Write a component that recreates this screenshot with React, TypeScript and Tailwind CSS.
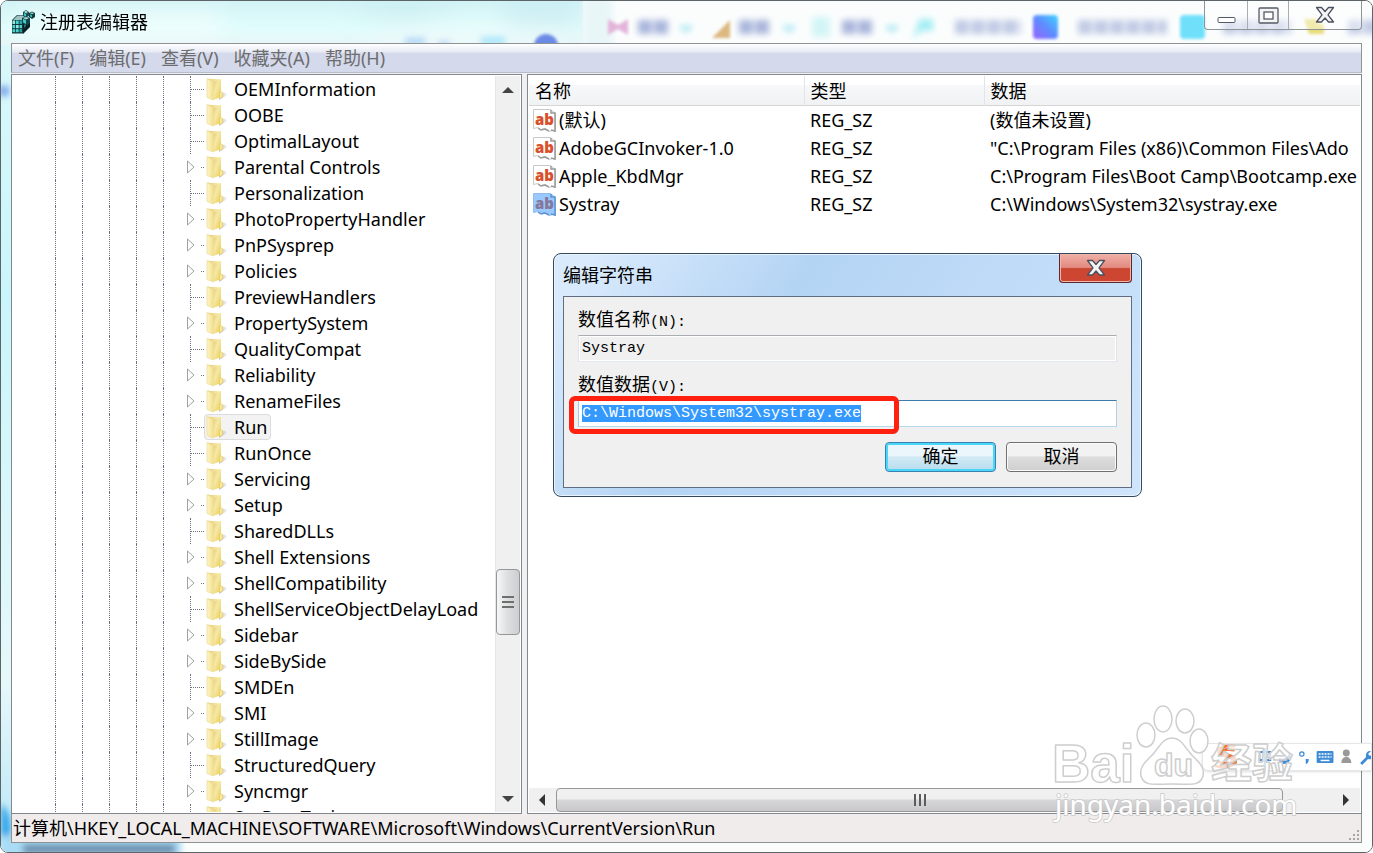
import React, { useEffect, useRef } from "react";

type TreeItem = { name: string; expandable?: boolean; selected?: boolean };

const treeItems: TreeItem[] = [
  { name: "OEMInformation" },
  { name: "OOBE" },
  { name: "OptimalLayout" },
  { name: "Parental Controls", expandable: true },
  { name: "Personalization" },
  { name: "PhotoPropertyHandler", expandable: true },
  { name: "PnPSysprep", expandable: true },
  { name: "Policies", expandable: true },
  { name: "PreviewHandlers" },
  { name: "PropertySystem", expandable: true },
  { name: "QualityCompat" },
  { name: "Reliability", expandable: true },
  { name: "RenameFiles", expandable: true },
  { name: "Run", selected: true },
  { name: "RunOnce" },
  { name: "Servicing", expandable: true },
  { name: "Setup", expandable: true },
  { name: "SharedDLLs" },
  { name: "Shell Extensions", expandable: true },
  { name: "ShellCompatibility", expandable: true },
  { name: "ShellServiceObjectDelayLoad" },
  { name: "Sidebar", expandable: true },
  { name: "SideBySide", expandable: true },
  { name: "SMDEn" },
  { name: "SMI", expandable: true },
  { name: "StillImage", expandable: true },
  { name: "StructuredQuery" },
  { name: "Syncmgr", expandable: true },
  { name: "SysPrepTapi" },
];

const values = [
  { name: "(默认)", type: "REG_SZ", data: "(数值未设置)" },
  {
    name: "AdobeGCInvoker-1.0",
    type: "REG_SZ",
    data: '"C:\\Program Files (x86)\\Common Files\\Ado',
  },
  {
    name: "Apple_KbdMgr",
    type: "REG_SZ",
    data: "C:\\Program Files\\Boot Camp\\Bootcamp.exe",
  },
  {
    name: "Systray",
    type: "REG_SZ",
    data: "C:\\Windows\\System32\\systray.exe",
    selected: true,
  },
];

const menus = ["文件(F)", "编辑(E)", "查看(V)", "收藏夹(A)", "帮助(H)"];

const RegeditIcon = () => (
  <svg width="24" height="26" viewBox="0 0 24 26" aria-hidden="true">
    {/* Large cube */}
    <path d="M1 11l5-5h8l2 3v11l-4 4.500H1z" fill="#12383b" />
    <path d="M2 11l4.500-4.500h8L11 11z" fill="#9fc3c3" />
    <g fill="#48d3d0">
      <rect x="1.500" y="11.500" width="2.700" height="3.500" fill="#8fe6e2" />
      <rect x="5" y="11.500" width="2.700" height="3.500" />
      <rect x="8.500" y="11.500" width="2.500" height="3.500" fill="#2ea3a2" />
      <rect x="1.500" y="16" width="2.700" height="3.200" />
      <rect x="5" y="16" width="2.700" height="3.200" fill="#8fe6e2" />
      <rect x="8.500" y="16" width="2.500" height="3.200" />
      <rect x="1.500" y="20.200" width="2.700" height="3" />
      <rect x="5" y="20.200" width="2.700" height="3" />
      <rect x="8.500" y="20.200" width="2.500" height="3" fill="#2ea3a2" />
    </g>
    <path d="M12 11l7-2v9l-7 7z" fill="#0a2224" />
    <path d="M13 16l2-2v3l-2 2zM16 13l2-2v3l-2 2z" fill="#1f7577" />
    {/* Small cubes breaking away */}
    <path d="M11 9l4-2 4 2v5l-4 2-4-2z" fill="#11474a" />
    <path d="M12 9l3-1.300L18 9l-3 1.500z" fill="#a5dcd9" />
    <path d="M12 10l3 1.300V15l-3-1.500z" fill="#45cbc8" />
    <path d="M12 3l3-2 3 2v4l-3 1.500L12 7z" fill="#194f53" />
    <path d="M13 3l2-1.200L17 3l-2 1.200z" fill="#b3e2df" />
    <path d="M13 4l2 1v2.500l-2-1z" fill="#4ac5c3" />
    <path d="M18 4l3-1.500L24 4v4l-3 2-3-2z" fill="#113c3f" />
    <path d="M19 4.300l2-1 2 1-2 1z" fill="#8ed2d0" />
    <path d="M19 5.300l2 1v2.200l-2-1z" fill="#3db7b5" />
  </svg>
);

const FolderIcon = () => (
  <svg
    width="24"
    height="26"
    viewBox="0 0 24 26"
    className="shrink-0"
    aria-hidden="true"
  >
    <defs>
      <linearGradient id="folderFront" x1="0" y1="0" x2="1" y2="1">
        <stop offset="0" stopColor="#e6cb7c" />
        <stop offset="0.4" stopColor="#f6e9a6" />
        <stop offset="1" stopColor="#e8c84e" />
      </linearGradient>
      <linearGradient id="folderSide" x1="0" y1="0" x2="1" y2="0">
        <stop offset="0" stopColor="#fdf6c4" />
        <stop offset="1" stopColor="#f3de8c" />
      </linearGradient>
      <linearGradient id="folderShadow" x1="0" y1="0" x2="1" y2="0">
        <stop offset="0" stopColor="#8a8a8a" stopOpacity="0.6" />
        <stop offset="1" stopColor="#8a8a8a" stopOpacity="0" />
      </linearGradient>
    </defs>
    <path d="M15 24l9-5.500-4-2-4 2z" fill="url(#folderShadow)" />
    <path d="M3.500 2.800L17 3.200v15L8.500 23z" fill="url(#folderFront)" />
    <path
      d="M3 2.500l6.500 3.200V24L3 21.500z"
      fill="url(#folderSide)"
      stroke="#ead58a"
      strokeWidth="0.600"
    />
    <path d="M9.500 5.700l7.500-2V21l-7.500 3z" fill="url(#folderFront)" />
    <path
      d="M15.500 16.500q2-1 3 0v4.500l-3 1.500z"
      fill="#fbe98e"
      stroke="#e2c25a"
      strokeWidth="0.500"
    />
  </svg>
);

const ValueIcon = ({ selected }: { selected?: boolean }) => (
  <svg
    width="25"
    height="25"
    viewBox="0 0 25 25"
    className="shrink-0"
    aria-hidden="true"
  >
    <path
      d="M.5 1.500h17l5 4v18l-3-1-3 1-4-3-5 1-3-2-4 1z"
      fill={selected ? "#99c9ff" : "#fff"}
      stroke={selected ? "#8ebdf0" : "#c9c9c9"}
    />
    <path
      d="M18 2v3h4v18l-4-1M5 20l3 2 4-1 4 2"
      fill="none"
      stroke={selected ? "#5d93cf" : "#999"}
      strokeWidth="1.500"
    />
    <text
      x="2"
      y="17"
      fontFamily="Open Sans, sans-serif"
      fontSize="15"
      fontWeight="800"
      fill={selected ? "#85779c" : "#d9512c"}
    >
      ab
    </text>
  </svg>
);

const CloseGlyph = () => (
  <svg width="20" height="18" viewBox="0 0 20 18" aria-hidden="true">
    <path
      d="M1.500 1.500h5L10 5.500l3.500-4h5L13 8.800l5.500 7.200h-5L10 12l-3.500 4h-5L7 8.800z"
      fill="#f4f4f4"
      stroke="#4b5060"
      strokeWidth="1.300"
      strokeLinejoin="round"
    />
  </svg>
);

// Blurred desktop seen through the glass frame
const GlassBackdrop = () => (
  <svg className="absolute inset-0 h-full w-full" aria-hidden="true">
    <defs>
      <linearGradient id="aqua" x1="0" y1="0" x2="0" y2="1">
        <stop offset="0" stopColor="#d2f3f6" />
        <stop offset="0.6" stopColor="#e0fdfc" />
        <stop offset="1" stopColor="#e9f6f7" />
      </linearGradient>
      <linearGradient id="leftEdge" x1="0" y1="0" x2="0" y2="1">
        <stop offset="0" stopColor="#dcf9fa" />
        <stop offset="0.35" stopColor="#c9f6fb" />
        <stop offset="0.8" stopColor="#e6f8fa" />
        <stop offset="1" stopColor="#b9e6f6" />
      </linearGradient>
      <linearGradient id="violet" x1="1" y1="0" x2="0" y2="1">
        <stop offset="0" stopColor="#3fd2ff" />
        <stop offset="0.5" stopColor="#5f8bff" />
        <stop offset="1" stopColor="#9a62ff" />
      </linearGradient>
      <filter id="soft" x="-5%" y="-50%" width="110%" height="200%">
        <feGaussianBlur stdDeviation="3" />
      </filter>
      <filter id="crisp" x="-5%" y="-50%" width="110%" height="200%">
        <feGaussianBlur stdDeviation="1.800" />
      </filter>
      <filter id="wide">
        <feGaussianBlur stdDeviation="12" />
      </filter>
    </defs>
    <rect width="100%" height="100%" fill="#fbfdfd" />
    <rect width="14" height="100%" fill="url(#leftEdge)" />
    <rect width="582" height="44" fill="url(#aqua)" />
    <g filter="url(#wide)">
      <path d="M20 12h200v22H20z" fill="#fff" opacity="0.6" />
      <path d="M340 4h130l-70 16z" fill="#bfe6ea" opacity="0.7" />
      <path d="M500 0h78v26h-70z" fill="#c4e8ef" opacity="0.7" />
      <path d="M380 30h190v14H380z" fill="#f3fbfc" />
    </g>
    <g filter="url(#soft)">
      <rect x="582" y="-10" width="30" height="64" fill="#e9f6f8" />
      <path d="M404 37h20v7h-20z" fill="#b0d6f7" />
      <path d="M438 41h10v3h-10z" fill="#8fb8f5" />
      <path d="M480 36h24v8h-24z" fill="#a8e6fb" />
      <g stroke="#a9b6dc" strokeWidth="14" strokeDasharray="14 2">
        <path d="M637 26h31M738 26h32M841 26h32" />
        <path d="M954 26h66M1077 26h89M1222 26h68M1347 26h40" opacity="0.7" />
      </g>
      <path
        d="M680 25l5 4 5-4M783 25l5 4 5-4M886 25l5 4 5-4"
        fill="none"
        stroke="#9be3f0"
        strokeWidth="4"
      />
      <path d="M912 38l6-20h14v12h-12z" fill="#a5eef5" />
      <path d="M811 16h18v20h-18z" fill="#d3f5f6" />
      <path d="M-2 90q8 0 10 0" stroke="#7ba6ee" strokeWidth="10" />
    </g>
    <g filter="url(#crisp)">
      <circle cx="545" cy="45" r="12" fill="#6b8ae6" />
      <path d="M607 18l10 6 10-6v16l-10-6-10 6z" fill="#e3b4da" />
      <path d="M711 37l18-18v18z" fill="#dcb880" />
      <rect x="1032" y="14" width="25" height="24" rx="4" fill="url(#violet)" />
      <rect x="1179" y="14" width="25" height="24" rx="4" fill="#70e0fa" />
      <path d="M1303 18h14v4l6 2v9h-15z" fill="#e8dc78" />
    </g>
    {/* Bottom left corner of the desktop */}
    <svg y="100%" overflow="visible">
      <g filter="url(#soft)">
        <path d="M0-48q12 10 9 32H0z" fill="#2ea4ec" />
        <path d="M0-16h180V4H0z" fill="#a9dcf4" />
        <path d="M22-8h152V2H22z" fill="#6d8fb0" />
      </g>
    </svg>
  </svg>
);

const ImeBar = () => (
  <div
    className="absolute top-[742px] right-0 flex h-7 w-[170px] items-center rounded-l-md border border-gray-200 bg-white shadow"
    aria-hidden="true"
  >
    <svg width="170" height="28" viewBox="0 0 170 28">
      <path
        d="M33 3c-8-1-18 0-17 6 1 5 14 4 14 8s-8 4-15 2M12 23c9 2 22 1 21-6-1-6-14-4-14-8 0-3 8-3 13-2"
        fill="none"
        stroke="#f0763a"
        strokeWidth="3"
      />
      <path d="M57 9h11v8H57zM62.500 5v17" fill="none" stroke="#3d8ad6" strokeWidth="2" />
      <path d="M77 15c4 2 9 0 10-5 5 6-1 11-5 11s-6-3-5-6z" fill="#3d8ad6" />
      <circle cx="100" cy="11" r="2.200" fill="none" stroke="#3d8ad6" strokeWidth="1.200" />
      <path d="M104 16h3c0 3-1 5-3 5z" fill="#3d8ad6" />
      <rect x="115" y="8" width="17" height="12" rx="1" fill="#3d8ad6" />
      <path
        d="M117 11h13M117 14h13"
        stroke="#fff"
        strokeWidth="1.500"
        strokeDasharray="2 1"
      />
      <path d="M119 17.500h9" stroke="#fff" strokeWidth="1.500" />
      <circle cx="145" cy="10" r="3.500" fill="#999" />
      <path d="M140 20c0-8 10-8 10 0z" fill="#999" />
      <path
        d="M159 20l6-6c-1-4 2-7 5-6l-3 3 2 2 3-2c1 4-2 6-5 5l-6 6z"
        fill="#3d8ad6"
      />
    </svg>
  </div>
);

const Watermark = () => (
  <svg
    className="pointer-events-none absolute top-[698px] right-[63px]"
    width="260"
    height="130"
    viewBox="0 0 260 130"
    aria-hidden="true"
  >
    <g
      fill="#fff"
      fillOpacity="0.75"
      stroke="#cecece"
      strokeWidth="1.500"
      strokeLinejoin="round"
    >
      <ellipse cx="97" cy="36" rx="9" ry="12" />
      <ellipse cx="114" cy="20" rx="9" ry="13" />
      <ellipse cx="136" cy="22" rx="9" ry="12" />
      <ellipse cx="150" cy="42" rx="9" ry="12" />
      <path d="M123 39c9 0 12 8 18 15 8 9 15 13 13 23-3 11-14 8-31 8s-28 3-31-8c-2-10 5-14 13-23 6-7 9-15 18-15z" />
      <text x="3" y="83" fontFamily="Liberation Sans, sans-serif" fontSize="53" fontWeight="700">
        Bai
      </text>
      <text x="105" y="77" fontFamily="Liberation Sans, sans-serif" fontSize="32" fontWeight="700">
        du
      </text>
      <text x="162" y="79" fontFamily="Noto Sans CJK SC, sans-serif" fontSize="41" fontWeight="700">
        经验
      </text>
    </g>
    <text
      x="6"
      y="116"
      fontFamily="Noto Sans, sans-serif"
      fontSize="28"
      fill="#fff"
      stroke="#c9c9c9"
      strokeWidth="1.500"
      paintOrder="stroke"
    >
      jingyan.baidu.com
    </text>
  </svg>
);

const TreePane = () => (
  <div className="flex w-[511px] shrink-0 border border-[#828790] bg-white p-px">
    <ul className="min-w-0 flex-1 overflow-hidden">
      {treeItems.map((item) => (
        <li key={item.name} className="flex h-[26px] pl-[42px]">
          {[0, 1, 2, 3, 4].map((level) => (
            <span
              key={level}
              className="w-[27px] shrink-0 border-l border-dotted border-gray-500"
            />
          ))}
          {item.expandable ? (
            <span className="flex w-[14px] shrink-0 items-center justify-between">
              <svg
                width="10"
                height="14"
                viewBox="0 0 10 14"
                className="-ml-1"
                aria-hidden="true"
              >
                <path d="M1.500 1v12L8 7z" fill="#fff" stroke="#a0a0a0" />
              </svg>
              <span className="w-[3px] border-t border-dotted border-gray-500" />
            </span>
          ) : (
            <span className="flex w-[14px] shrink-0 items-center border-l border-dotted border-gray-500">
              <span className="w-full border-t border-dotted border-gray-500" />
            </span>
          )}
          <span
            className={
              item.selected
                ? "flex items-center rounded-sm bg-[#f3f3f3] pr-1 outline outline-[#dcdcdc] -outline-offset-1"
                : "flex items-center pr-1"
            }
          >
            <FolderIcon />
            <span className="ml-[6px] text-lg leading-[26px] whitespace-nowrap">
              {item.name}
            </span>
          </span>
        </li>
      ))}
    </ul>
    {/* Vertical scroll bar */}
    <div className="flex w-[25px] shrink-0 flex-col items-center border-l border-[#e6e6e6] bg-[#f0f0f0]">
      <svg width="24" height="28" viewBox="0 0 24 28" aria-hidden="true">
        <path d="M6 17l6-6 6 6z" fill="#444" />
      </svg>
      <div className="flex-[466]" />
      <div className="flex h-[66px] w-6 flex-col items-center justify-center gap-[3px] rounded-sm border border-[#979797] bg-linear-to-r from-[#f6f6f6] via-[#dcdee0] to-[#cdced0]">
        <span className="h-[2px] w-3 bg-[#6f6f6f]" />
        <span className="h-[2px] w-3 bg-[#6f6f6f]" />
        <span className="h-[2px] w-3 bg-[#6f6f6f]" />
      </div>
      <div className="flex-[149]" />
      <svg width="24" height="28" viewBox="0 0 24 28" aria-hidden="true">
        <path d="M6 12l6 6 6-6z" fill="#444" />
      </svg>
    </div>
  </div>
);

const ValuePane = () => (
  <div className="flex min-w-0 flex-1 flex-col border border-[#828790] bg-white p-px">
    <div className="min-h-0 flex-1 overflow-hidden">
      <table className="w-full table-fixed border-collapse text-lg">
        <thead>
          <tr className="h-[29px] border-b border-[#d5d5d5] bg-linear-to-b from-white from-30% via-[#f7f8fa] via-30% to-[#f1f2f4] text-left">
            <th className="w-[275px] border-r border-[#e3e4e6] p-0 pt-px pl-[6px] leading-7 font-normal">
              名称
            </th>
            <th className="w-[180px] border-r border-[#e3e4e6] p-0 pt-px pl-[6px] leading-7 font-normal">
              类型
            </th>
            <th className="p-0 pt-px pl-[6px] leading-7 font-normal">数据</th>
          </tr>
        </thead>
        <tbody>
          {values.map((v) => (
            <tr key={v.name} className="h-7">
              <td className="p-0 pl-1">
                <span className="flex h-7 items-center gap-px">
                  <ValueIcon selected={v.selected} />
                  <span className="leading-7">{v.name}</span>
                </span>
              </td>
              <td className="p-0 pl-[6px] leading-7">{v.type}</td>
              <td className="overflow-hidden p-0 pl-[6px] leading-7 whitespace-nowrap">
                {v.data}
              </td>
            </tr>
          ))}
        </tbody>
      </table>
    </div>
    {/* Horizontal scroll bar */}
    <div className="flex h-6 shrink-0 items-center bg-[#f0f0f0]">
      <svg width="27" height="24" viewBox="0 0 27 24" aria-hidden="true">
        <path d="M16 6v12l-6-6z" fill="#333" />
      </svg>
      <div className="flex h-6 flex-1 items-center justify-center gap-[3px] rounded-sm border border-[#979797] bg-linear-to-b from-[#f0f0f0] from-45% via-[#d8d8da] via-50% to-[#c8c8ca]">
        <span className="h-3 w-[2px] bg-[#5c5c5c]" />
        <span className="h-3 w-[2px] bg-[#5c5c5c]" />
        <span className="h-3 w-[2px] bg-[#5c5c5c]" />
      </div>
      <div className="w-[50px]" />
      <svg width="27" height="24" viewBox="0 0 27 24" aria-hidden="true">
        <path d="M10 6v12l6-6z" fill="#333" />
      </svg>
    </div>
  </div>
);

const EditStringDialog = () => {
  const dataRef = useRef<HTMLInputElement>(null);

  useEffect(() => {
    dataRef.current?.focus();
    dataRef.current?.select();
  }, []);

  return (
    <div
      role="dialog"
      aria-labelledby="dialog-title"
      className="absolute top-[252px] left-[552px] w-[589px] rounded-lg border border-[#35495e] bg-linear-125 from-[#d9eafc] from-5% via-[#b4d4f4] via-35% to-[#cfe5fc] px-[9px] pb-[8px] shadow-[inset_0_0_0_1px_#e8f4ff]"
    >
      <div className="flex h-[42px] items-start justify-between">
        <h2 id="dialog-title" className="mt-2 text-lg leading-[26px]">
          编辑字符串
        </h2>
        <button
          type="button"
          aria-label="关闭"
          className="flex h-[29px] w-[73px] items-center justify-center rounded-b border border-t-0 border-[#5c2a2c] bg-linear-to-b from-[#f0b0a6] from-0% via-[#e28a80] via-48% to-[#cc4631] to-52% shadow-[inset_0_0_0_1px_#f0b5ab]"
        >
          <CloseGlyph />
        </button>
      </div>
      <form
        className="h-[192px] border border-[#5f6f81] bg-[#f0f0f0] px-[14px] pt-[10px] font-['Liberation_Mono','Noto_Sans_CJK_SC',monospace] text-[15px]"
        onSubmit={(e) => e.preventDefault()}
      >
        <label htmlFor="value-name" className="block h-7 leading-7">
          <span className="text-lg">数值名称</span>(N):
        </label>
        <input
          id="value-name"
          readOnly
          defaultValue="Systray"
          className="block h-[27px] w-full border border-t-[#abadb3] border-r-[#e2e3ea] border-b-[#e3e9ef] border-l-[#e2e3ea] bg-[#f0f0f0] px-[3px] shadow-[inset_0_0_0_1px_#fff]"
        />
        <label htmlFor="value-data" className="mt-[10px] block h-7 leading-7">
          <span className="text-lg">数值数据</span>(V):
        </label>
        <input
          id="value-data"
          ref={dataRef}
          defaultValue="C:\Windows\System32\systray.exe"
          className="block h-[27px] w-full border border-t-[#3d7bad] border-r-[#b5cfe7] border-b-[#b7d9ed] border-l-[#a4c9e3] bg-white px-[3px] outline-none selection:bg-[#3399ff] selection:text-white"
        />
        <div className="mt-[15px] flex justify-end gap-[10px] text-lg">
          <button
            type="submit"
            className="h-[30px] w-[111px] rounded border border-[#3c7fb1] bg-linear-to-b from-[#eaf6fc] from-45% via-[#d3eaf5] via-50% to-[#b5dbed] pt-px leading-7 shadow-[inset_0_0_0_2px_#48d8f7]"
          >
            确定
          </button>
          <button
            type="button"
            className="h-[30px] w-[111px] rounded border border-[#707070] bg-linear-to-b from-[#f2f2f2] from-45% via-[#dddddd] via-50% to-[#cfcfcf] pt-px leading-7 shadow-[inset_0_0_0_1px_#fafafa]"
          >
            取消
          </button>
        </div>
      </form>
      {/* Red highlight over the data field */}
      <div className="pointer-events-none absolute top-[142px] left-[15px] h-[38px] w-[330px] rounded-md border-5 border-[#ff2010]" />
    </div>
  );
};

const App: React.FC = () => {
  return (
    <div className="relative flex h-screen w-full flex-col overflow-hidden rounded-lg border border-[#5d6468] px-[10px] pb-[9px] font-['Noto_Sans','Noto_Sans_CJK_SC',sans-serif] text-black">
      <GlassBackdrop />

      <header className="relative flex h-[42px] shrink-0 items-start justify-between">
        <div className="flex items-center pt-[7px]">
          <RegeditIcon />
          <h1 className="ml-[5px] text-lg leading-7">注册表编辑器</h1>
        </div>
        <div className="flex h-[29px] w-[158px] overflow-hidden rounded-b border border-t-0 border-[#8f9496] bg-white/40">
          <button
            type="button"
            aria-label="最小化"
            className="flex w-[43px] items-center justify-center border-r border-[#a9adaf]"
          >
            <svg width="19" height="18" viewBox="0 0 19 18" aria-hidden="true">
              <rect x="1" y="11.500" width="17" height="5" rx="1" fill="#fff" stroke="#555a66" />
            </svg>
          </button>
          <button
            type="button"
            aria-label="最大化"
            className="flex w-[41px] items-center justify-center border-r border-[#a9adaf]"
          >
            <svg width="21" height="17" viewBox="0 0 21 17" aria-hidden="true">
              <rect x="1" y="1" width="19" height="15" rx="1" fill="#f4f4f4" stroke="#555a66" strokeWidth="1.300" />
              <rect x="6" y="5" width="9" height="7" fill="#fff" stroke="#555a66" strokeWidth="1.300" />
            </svg>
          </button>
          <button
            type="button"
            aria-label="关闭"
            className="flex flex-1 items-center justify-center"
          >
            <CloseGlyph />
          </button>
        </div>
      </header>

      <div className="relative flex min-h-0 flex-1 flex-col border-y border-[#8e9295] bg-[#f0f0f0]">
        <nav className="flex h-[29px] shrink-0 items-center gap-[15px] border-x border-b border-x-[#8e9295] border-b-[#b6bccc] bg-linear-to-b from-white from-0% via-[#e6e9f3] via-30% to-[#d4d9ec] to-31% pl-[6px] text-lg text-[#6d6d6d]">
          {menus.map((m) => (
            <button key={m} type="button" className="leading-7">
              {m}
            </button>
          ))}
        </nav>

        <main className="mt-px flex min-h-0 flex-1 gap-[5px]">
          <TreePane />
          <ValuePane />
        </main>

        <footer className="flex h-[28px] shrink-0 items-center justify-between border-x border-[#8e9295] bg-[#f0eceb]">
          <span className="pl-px text-lg leading-7">
            计算机\HKEY_LOCAL_MACHINE\SOFTWARE\Microsoft\Windows\CurrentVersion\Run
          </span>
          <svg width="12" height="12" viewBox="0 0 12 12" className="self-end" aria-hidden="true">
            <path
              d="M8 0h2v2H8zM4 4h2v2H4zM8 4h2v2H8zM0 8h2v2H0zM4 8h2v2H4zM8 8h2v2H8z"
              fill="#a8a4a3"
            />
          </svg>
        </footer>
      </div>

      <EditStringDialog />
      <ImeBar />
      <Watermark />
    </div>
  );
};

export default App;
